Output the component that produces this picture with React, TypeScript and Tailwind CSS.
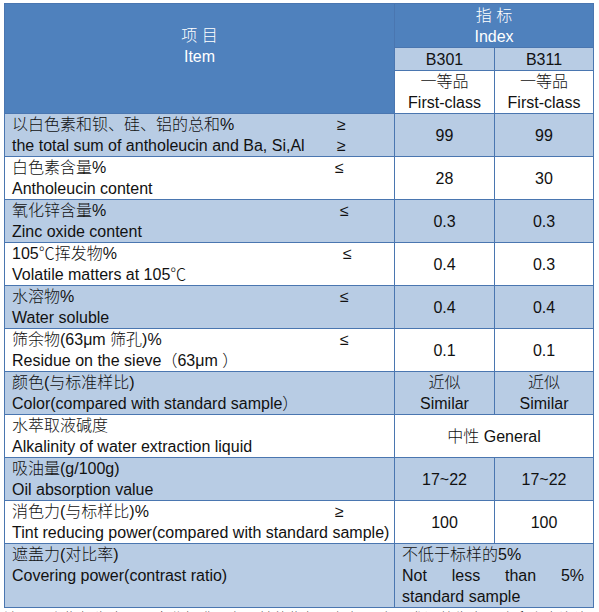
import React from 'react';

type Row = {
  zh: string;
  en: string;
  sign?: string;
  signLine?: 'first' | 'both';
  signPos?: string;
  b301?: string;
  b311?: string;
  merged?: React.ReactNode;
};

const rows: Row[] = [
  { zh: '以白色素和钡、硅、铝的总和%', en: 'the total sum of antholeucin and Ba, Si,Al', sign: '≥', signLine: 'both', signPos: 'left-[325px]', b301: '99', b311: '99' },
  { zh: '白色素含量%', en: 'Antholeucin content', sign: '≤', signPos: 'left-[323px]', b301: '28', b311: '30' },
  { zh: '氧化锌含量%', en: 'Zinc oxide content', sign: '≤', signPos: 'left-[328px]', b301: '0.3', b311: '0.3' },
  { zh: '105℃挥发物%', en: 'Volatile matters at 105℃', sign: '≤', signPos: 'left-[331px]', b301: '0.4', b311: '0.3' },
  { zh: '水溶物%', en: 'Water soluble', sign: '≤', signPos: 'left-[328px]', b301: '0.4', b311: '0.4' },
  { zh: '筛余物(63μm 筛孔)%', en: 'Residue on the sieve（63μm ）', sign: '≤', signPos: 'left-[328px]', b301: '0.1', b311: '0.1' },
  { zh: '颜色(与标准样比)', en: 'Color(compared with standard sample）', b301: '近似\nSimilar', b311: '近似\nSimilar' },
  { zh: '水萃取液碱度', en: 'Alkalinity of water extraction liquid', merged: '中性 General' },
  { zh: '吸油量(g/100g)', en: 'Oil absorption value', b301: '17~22', b311: '17~22' },
  { zh: '消色力(与标样比)%', en: 'Tint reducing power(compared with standard sample)', sign: '≥', signPos: 'left-[323px]', b301: '100', b311: '100' },
];

const cell = 'border border-[#4a76b0] p-0 leading-[21px]';

export default function App() {
  return (
    <div className="bg-white h-[612px] overflow-hidden font-['Liberation_Sans','Noto_Sans_CJK_SC',sans-serif] font-light text-[16px] text-[#111]">
      <div className="pt-[3px] pl-[4px]">
        <table className="border-collapse table-fixed w-[589px]">
          <colgroup>
            <col className="w-[390px]" />
            <col className="w-[100px]" />
            <col className="w-[99px]" />
          </colgroup>
          <thead>
            <tr className="h-[44px]">
              <th rowSpan={3} className={`${cell} bg-[#4f81bd] text-white font-light align-top pt-[21px]`}>
                <div>项 目</div>
                <div>Item</div>
              </th>
              <th colSpan={2} className={`${cell} bg-[#4f81bd] text-white font-light`}>
                <div>指 标</div>
                <div>Index</div>
              </th>
            </tr>
            <tr className="h-[23px]">
              <th className={`${cell} bg-[#b8cce4] font-light`}>B301</th>
              <th className={`${cell} bg-[#b8cce4] font-light`}>B311</th>
            </tr>
            <tr className="h-[43px]">
              <th className={`${cell} bg-white font-light`}>
                <div>一等品</div>
                <div>First-class</div>
              </th>
              <th className={`${cell} bg-white font-light`}>
                <div>一等品</div>
                <div>First-class</div>
              </th>
            </tr>
          </thead>
          <tbody>
            {rows.map((r, i) => {
              const bg = i % 2 === 0 ? 'bg-[#b8cce4]' : 'bg-white';
              return (
                <tr key={i} className={`${bg} h-[43px]`}>
                  <td className={`${cell} pl-[7px] align-middle`}>
                    <div className="relative whitespace-nowrap">
                      <div>{r.zh}</div>
                      <div>{r.en}</div>
                      {r.sign && (
                        <span className={`absolute top-0 ${r.signPos}`}>{r.sign}</span>
                      )}
                      {r.sign && r.signLine === 'both' && (
                        <span className={`absolute top-[21px] ${r.signPos}`}>{r.sign}</span>
                      )}
                    </div>
                  </td>
                  {r.merged ? (
                    <td colSpan={2} className={`${cell} text-center`}>{r.merged}</td>
                  ) : (
                    <>
                      <td className={`${cell} text-center whitespace-pre-line`}>{r.b301}</td>
                      <td className={`${cell} text-center whitespace-pre-line`}>{r.b311}</td>
                    </>
                  )}
                </tr>
              );
            })}
            <tr className="bg-[#b8cce4]">
              <td className={`${cell} pl-[7px] align-top`}>
                <div>遮盖力(对比率)</div>
                <div>Covering power(contrast ratio)</div>
                <div>&nbsp;</div>
              </td>
              <td colSpan={2} className={`${cell} pl-[7px] pr-[9px] text-justify`}>
                不低于标样的5%
                <br />
                Not less than 5% standard sample
              </td>
            </tr>
          </tbody>
        </table>
        <p className="mt-[2px] text-[15px] leading-[18px] whitespace-nowrap">
          注：以上指标为本公司企业标准，各项性能指标可根据用户要求调整生产，欢迎来电咨询。
        </p>
      </div>
    </div>
  );
}
